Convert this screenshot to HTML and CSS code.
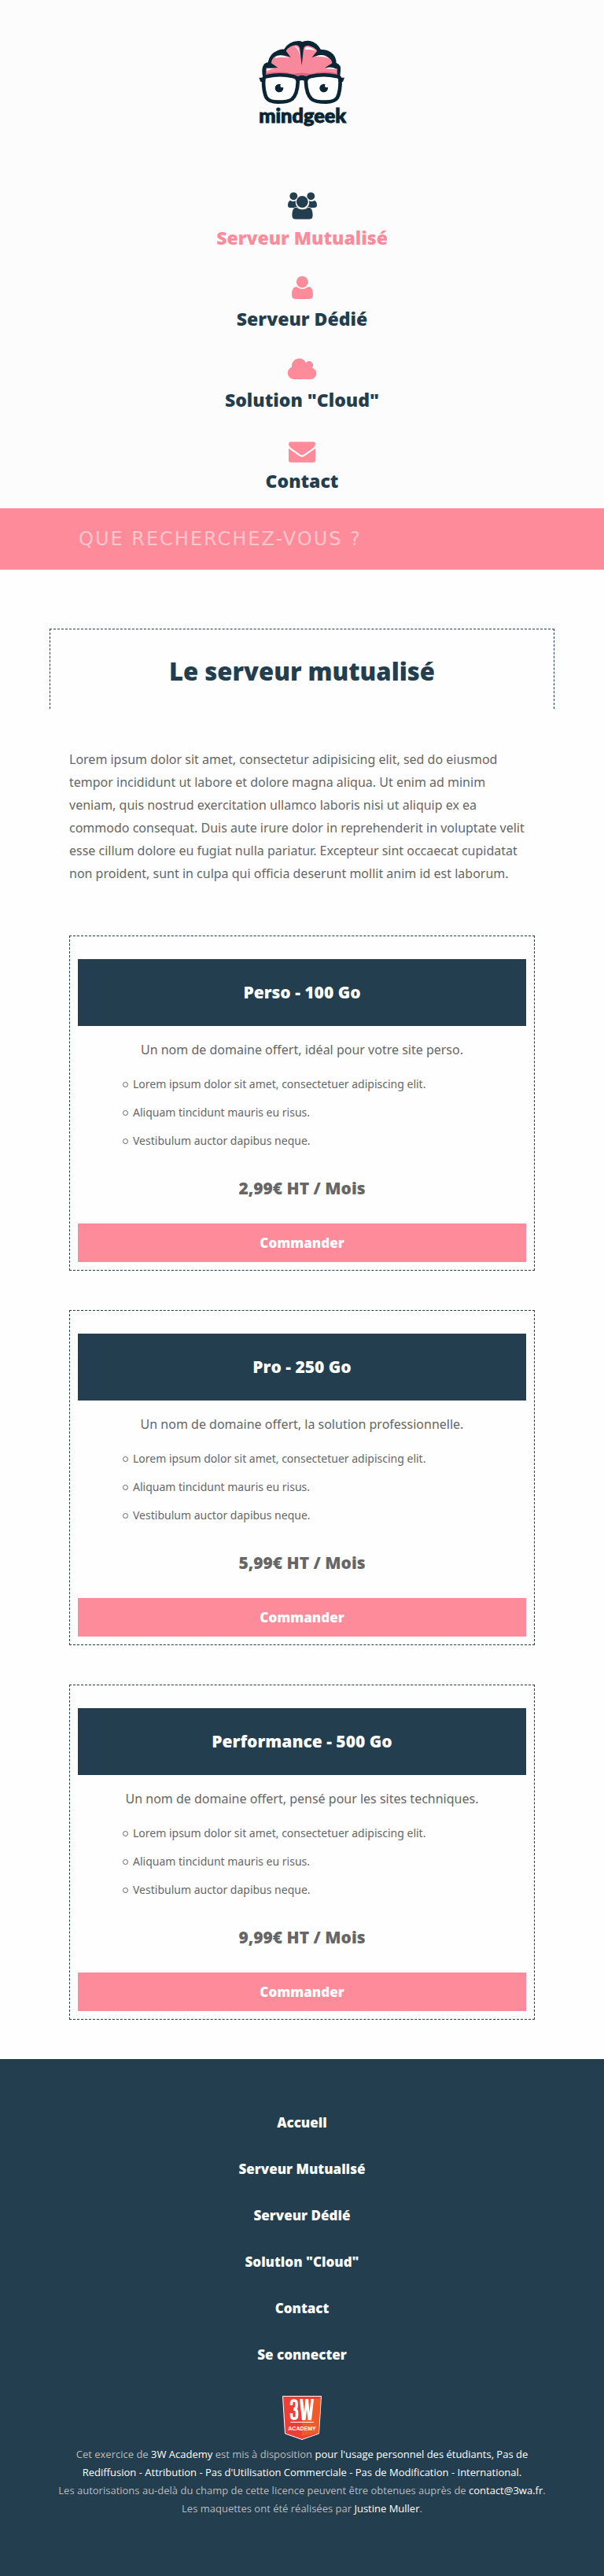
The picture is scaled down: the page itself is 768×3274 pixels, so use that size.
FILE: index.html
```html
<!DOCTYPE html>
<html lang="fr">
<head>
<meta charset="utf-8">
<meta name="viewport" content="width=device-width, initial-scale=1">
<title>Mindgeek - Le serveur mutualisé</title>
<link rel="stylesheet" href="styles.css">
</head>
<body>
<header class="header">
  <a class="logo" href="#" aria-label="mindgeek">
    <svg width="120" height="114" viewBox="72 60 360 342" aria-hidden="true">
      <path fill="#0a2533" d="M104 210Q94 172 108 154Q116 148 122 148Q128 115 160 102Q172 96 183 98Q203 66 238 66Q248 66 253 70Q262 64 282 66Q308 71 324 99Q345 98 360 108Q382 122 383 150Q402 156 399 180L396 210Z"/>
      <path fill="#f8889b" d="M115 200V170L160 168L135 151Q135 136 148 126Q166 113 209 128L191 104Q204 84 228 82Q242 82 244 96L251 160L258 96Q262 82 276 84Q298 88 310 104L289 130Q330 112 350 127Q366 136 367 151L340 168L386 172V200Z"/>
      <path fill="#d9647d" d="M115 200V190Q180 178 218 192Q250 184 285 192Q335 176 386 190V204Z"/>
      <path fill="#fff" d="M117 170L146 172Q128 174 119 182ZM150 127Q174 114 202 132Q172 124 152 132ZM222 87Q240 80 244 120Q236 92 222 87ZM264 92Q278 82 306 104Q284 96 264 100ZM303 126Q330 112 352 132Q330 124 303 126ZM346 168Q366 164 384 174Q364 172 346 172Z"/>
      <g fill="#fff" stroke="#0a2533" stroke-width="14" stroke-linejoin="round">
        <path d="M105 216Q105 202 120 201Q170 190 220 202Q238 207 236 225Q234 270 214 288Q200 299 160 299Q127 299 116 282Q105 260 105 216Z"/>
        <path d="M398 216Q398 202 383 201Q333 190 283 202Q265 207 267 225Q269 270 289 288Q303 299 343 299Q376 299 387 282Q398 260 398 216Z"/>
      </g>
      <path fill="#0a2533" d="M88 206H112V222H94ZM414 206H391V222H408ZM234 202Q252 193 270 202L269 222Q252 210 235 222Z"/>
      <circle cx="165" cy="246" r="16" fill="#0a2533"/><circle cx="335" cy="246" r="16" fill="#0a2533"/>
      <circle cx="176" cy="237" r="7" fill="#fff"/><circle cx="346" cy="237" r="7" fill="#fff"/>
      <text class="logo-text" x="254" y="379" text-anchor="middle">mindgeek</text>
    </svg>
  </a>
  <nav aria-label="Navigation principale">
    <ul class="nav">
      <li><a class="nav-link active" href="#">
        <svg class="icon" viewBox="0 0 38 36" aria-hidden="true"><circle cx="8.3" cy="5.3" r="4.9"/><circle cx="30.3" cy="5.3" r="4.9"/><path d="M4 10.700Q8 13 11 11Q10 17 14 20Q11 20 9.500 20H4Q1 20 1 17Q1 12 4 10.700ZM35 10.700Q31 13 28 11Q29 17 25 20H34Q38 20 38 17Q38 12 35 10.700Z"/><circle cx="19.300" cy="12.500" r="8.400" fill="#fcfcfc"/><circle cx="19.300" cy="12.500" r="7.400"/><path d="M12 19.300Q19.300 24.500 27 19.300C31.500 19.300 33 24 33 30Q33 35 28 35H11Q6 35 6 30C6 24 7.500 19.300 12 19.300Z" stroke="#fcfcfc" stroke-width=".8"/></svg>
        <span>Serveur Mutualisé</span></a></li>
      <li><a class="nav-link" href="#">
        <svg class="icon" viewBox="0 0 38 36" aria-hidden="true"><circle cx="19.300" cy="11.300" r="7.400"/><path d="M12 17.500Q19.300 23 27 17.500C31.500 17.500 33 22 33 28Q33 33 28 33H11Q6 33 6 28C6 22 7.500 17.500 12 17.500Z"/></svg>
        <span>Serveur Dédié</span></a></li>
      <li><a class="nav-link" href="#">
        <svg class="icon" viewBox="0 0 38 36" aria-hidden="true"><path d="M9 32A8 8 0 0 1 6 16.500A9.500 9.500 0 0 1 24 11A5 5 0 0 1 32 17.500A7.400 7.400 0 0 1 30 32Z"/></svg>
        <span>Solution "Cloud"</span></a></li>
      <li><a class="nav-link" href="#">
        <svg class="icon" viewBox="0 0 38 36" aria-hidden="true"><path d="M5 8.500H33Q36 8.500 36 11.500Q36 14 33 16.500L21.500 24.500Q19 26.500 16.500 24.500L5 16.500Q2 14 2 11.500Q2 8.500 5 8.500ZM2 17L15.500 26.500Q19 29 22.500 26.500L36 17V32Q36 34.700 33 34.700H5Q2 34.700 2 32Z"/></svg>
        <span>Contact</span></a></li>
    </ul>
  </nav>
</header>

<form class="search" role="search">
  <input class="search-input" type="search" aria-label="Que recherchez-vous ?" placeholder="QUE RECHERCHEZ-VOUS ?">
</form>

<main class="main">
  <h1 class="title">Le serveur mutualisé</h1>
  <p class="intro">Lorem ipsum dolor sit amet, consectetur adipisicing elit, sed do eiusmod tempor incididunt ut labore et dolore magna aliqua. Ut enim ad minim veniam, quis nostrud exercitation ullamco laboris nisi ut aliquip ex ea commodo consequat. Duis aute irure dolor in reprehenderit in voluptate velit esse cillum dolore eu fugiat nulla pariatur. Excepteur sint occaecat cupidatat non proident, sunt in culpa qui officia deserunt mollit anim id est laborum.</p>

  <div class="offers">
    <article class="offer">
      <h2 class="offer-title">Perso - 100 Go</h2>
      <p class="offer-text">Un nom de domaine offert, idéal pour votre site perso.</p>
      <ul class="features">
        <li>Lorem ipsum dolor sit amet, consectetuer adipiscing elit.</li>
        <li>Aliquam tincidunt mauris eu risus.</li>
        <li>Vestibulum auctor dapibus neque.</li>
      </ul>
      <p class="price">2,99€ HT / Mois</p>
      <a class="order" href="#">Commander</a>
    </article>
    <article class="offer">
      <h2 class="offer-title">Pro - 250 Go</h2>
      <p class="offer-text">Un nom de domaine offert, la solution professionnelle.</p>
      <ul class="features">
        <li>Lorem ipsum dolor sit amet, consectetuer adipiscing elit.</li>
        <li>Aliquam tincidunt mauris eu risus.</li>
        <li>Vestibulum auctor dapibus neque.</li>
      </ul>
      <p class="price">5,99€ HT / Mois</p>
      <a class="order" href="#">Commander</a>
    </article>
    <article class="offer">
      <h2 class="offer-title">Performance - 500 Go</h2>
      <p class="offer-text">Un nom de domaine offert, pensé pour les sites techniques.</p>
      <ul class="features">
        <li>Lorem ipsum dolor sit amet, consectetuer adipiscing elit.</li>
        <li>Aliquam tincidunt mauris eu risus.</li>
        <li>Vestibulum auctor dapibus neque.</li>
      </ul>
      <p class="price">9,99€ HT / Mois</p>
      <a class="order" href="#">Commander</a>
    </article>
  </div>
</main>

<footer class="footer">
  <nav aria-label="Pied de page">
    <ul class="footer-nav">
      <li><a href="#">Accueil</a></li>
      <li><a href="#">Serveur Mutualisé</a></li>
      <li><a href="#">Serveur Dédié</a></li>
      <li><a href="#">Solution "Cloud"</a></li>
      <li><a href="#">Contact</a></li>
      <li><a href="#">Se connecter</a></li>
    </ul>
  </nav>
  <svg class="badge" width="50" height="56" viewBox="0 0 50 56" role="img" aria-label="3W Academy">
    <path fill="#ef3e36" stroke="#fff" d="M.5 .5H49.500L46.500 48L25 55.500L3.500 48Z"/>
    <path fill="#f15a29" d="M25 4H48.500L46 47.600L25 51Z"/>
    <g fill="none" stroke="#fff" stroke-width="3.600">
      <path d="M11.500 12V9Q11.500 6 14.700 6Q18 6 18 9V13Q18 17 14 17Q18.500 17 18.500 21V25Q18.500 29 14.800 29Q11.500 29 11.500 25V22"/>
    </g>
    <path fill="#fff" d="M22 4H26L28 21L29.500 4H33L34.500 21L36.500 4H40L37 31H32.500L31 17L29.500 31H25Z"/>
    <path fill="#fff" d="M10 33H40V34H10Z"/>
    <text class="badge-text" x="25" y="44" text-anchor="middle">ACADEMY</text>
  </svg>
  <p class="legal">Cet exercice de <a href="#">3W Academy</a> est mis à disposition <a href="#">pour l'usage personnel des étudiants, Pas de Rediffusion - Attribution - Pas d'Utilisation Commerciale - Pas de Modification - International.</a><br>Les autorisations au-delà du champ de cette licence peuvent être obtenues auprès de <a href="#">contact@3wa.fr</a>.<br>Les maquettes ont été réalisées par <a href="#">Justine Muller</a>.</p>
</footer>
</body>
</html>
```
FILE: styles.css
```css
*,
*::before { box-sizing: border-box; }

body {
  margin: 0;
  background: #fefefe;
  color: #666;
  font: 16px/29px "Noto Sans", "Open Sans", sans-serif;
}

a { color: inherit; text-decoration: none; }
ul { margin: 0; padding: 0; list-style: none; }

.nav-link,
.title,
.offer-title,
.price,
.order,
.footer-nav {
  font-family: "Open Sans", sans-serif;
  font-weight: 800;
}

.header {
  padding: 50px 0 20px;
  background: #fcfcfc;
}
.logo { display: block; width: 120px; margin: 0 auto 80px; }
.logo svg { display: block; }
.logo-text {
  font: 900 76px Lato, sans-serif;
  fill: #0a2533;
  stroke: #0a2533;
  stroke-width: 3px;
}

.nav { display: flex; flex-direction: column; gap: 30px; }
.nav-link {
  display: flex;
  flex-direction: column;
  align-items: center;
  gap: 7px;
  color: #223e4f;
  font-size: 23px;
  line-height: 30px;
}
.nav-link.active { color: #fd8b9a; }
.icon { width: 38px; height: 36px; fill: #fd8b9a; }
.active .icon { fill: #223e4f; }

.search { padding: 0 100px; background: #fd8b9a; }
.search-input {
  display: block;
  width: 100%;
  height: 78px;
  padding: 0;
  border: 0;
  outline: 0;
  appearance: none;
  background: transparent;
  color: #fff;
  font: 24px "DejaVu Sans", sans-serif;
  letter-spacing: 2px;
}
.search-input::placeholder { color: #fff; opacity: .5; }

.main { padding: 75px 88px 50px; }
.title {
  margin: 0 -25px 50px;
  padding: 33px 0 28px;
  border: 1px dashed #223e4f;
  border-bottom: 0;
  color: #223e4f;
  font-size: 31px;
  line-height: 40px;
  text-align: center;
}
.intro { margin: 0 0 64px; }

.offers { display: flex; flex-direction: column; gap: 50px; }
.offer {
  padding: 29px 10px 10px;
  border: 1px dashed #223e4f;
  text-align: center;
}
.offer-title {
  margin: 0 0 16px;
  padding: 28px 0;
  background: #223e4f;
  color: #fff;
  font-size: 21px;
  line-height: 29px;
}
.offer-text { margin: 0 0 11px; }
.features {
  padding-left: 57px;
  font-size: 14px;
  line-height: 36px;
  text-align: left;
}
.features li { display: flex; align-items: center; gap: 6px; }
.features li::before {
  content: "";
  width: 7px;
  height: 7px;
  border: 1px solid #666;
  border-radius: 50%;
}
.price {
  margin: 28px 0 30px;
  font-size: 21px;
}
.order {
  display: block;
  padding: 10px 0;
  background: #fd8b9a;
  color: #fff;
  font-size: 17px;
}

.footer {
  padding: 51px 70px 74px;
  background: #223e4f;
  color: #bbb;
  text-align: center;
}
.footer-nav {
  margin-bottom: 23px;
  color: #fff;
  font-size: 17px;
  line-height: 59px;
}
.badge { display: block; margin: 0 auto 7px; }
.badge-text { font: 700 7px "Liberation Sans Narrow", "Liberation Sans", sans-serif; fill: #fff; }
.legal { margin: 0; font: 13px/23px "Open Sans", sans-serif; }
.legal a { color: #fff; }
```
